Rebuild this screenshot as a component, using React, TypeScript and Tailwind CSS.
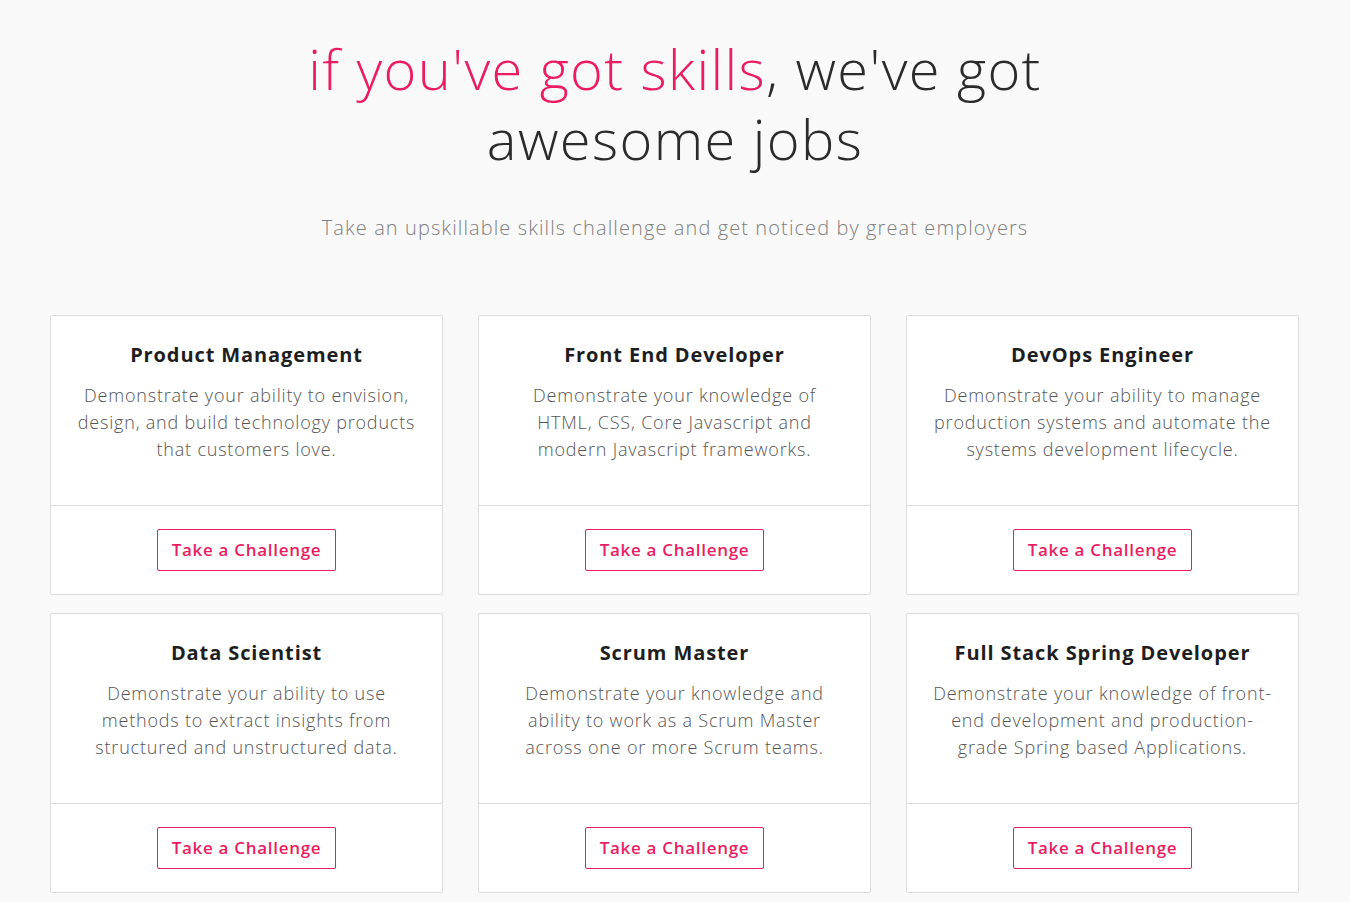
import React from "react";

const cards = [
  { title: "Product Management", desc: "Demonstrate your ability to envision, design, and build technology products that customers love." },
  { title: "Front End Developer", desc: "Demonstrate your knowledge of HTML, CSS, Core Javascript and modern Javascript frameworks." },
  { title: "DevOps Engineer", desc: "Demonstrate your ability to manage production systems and automate the systems development lifecycle." },
  { title: "Data Scientist", desc: "Demonstrate your ability to use methods to extract insights from structured and unstructured data." },
  { title: "Scrum Master", desc: "Demonstrate your knowledge and ability to work as a Scrum Master across one or more Scrum teams." },
  { title: "Full Stack Spring Developer", desc: "Demonstrate your knowledge of front-end development and production-grade Spring based Applications." },
];

export default function App() {
  return (
    <div className="min-h-[902px] bg-[#f9f9f9] font-['Open_Sans',sans-serif]">
      <div className="flex flex-col items-center pt-[33px]">
        <h1 className="text-center text-[56px] leading-[70px] font-light text-[#2b2b2b] w-[800px] tracking-[1.4px]">
          <span className="text-[#ea1d62]">if you've got skills</span>, we've got awesome jobs
        </h1>
        <p className="mt-[41px] text-[20px] leading-[28px] font-light text-[#808080] tracking-[1.1px]">
          Take an upskillable skills challenge and get noticed by great employers
        </p>
      </div>
      <div className="ml-[50px] w-[1249px] mt-[73px] grid grid-cols-3 gap-x-[35px] gap-y-[18px]">
        {cards.map((c) => (
          <div key={c.title} className="bg-white border border-[#dddddd] rounded-[2px] flex flex-col">
            <div className="h-[190px] px-[25px] pt-[25px] text-center border-b border-[#dddddd]">
              <h2 className="text-[20px] leading-[28px] font-bold text-[#1e1e1e] tracking-[0.9px]">{c.title}</h2>
              <p className="mt-[13px] text-[18px] leading-[27px] font-light text-[#555555] tracking-[0.8px]">{c.desc}</p>
            </div>
            <div className="h-[88px] flex items-center justify-center">
              <button className="h-[42px] px-[14px] border border-[#ea1d62] rounded-[2px] text-[#ea1d62] text-[17px] font-semibold bg-white tracking-[0.7px]">
                Take a Challenge
              </button>
            </div>
          </div>
        ))}
      </div>
    </div>
  );
}
